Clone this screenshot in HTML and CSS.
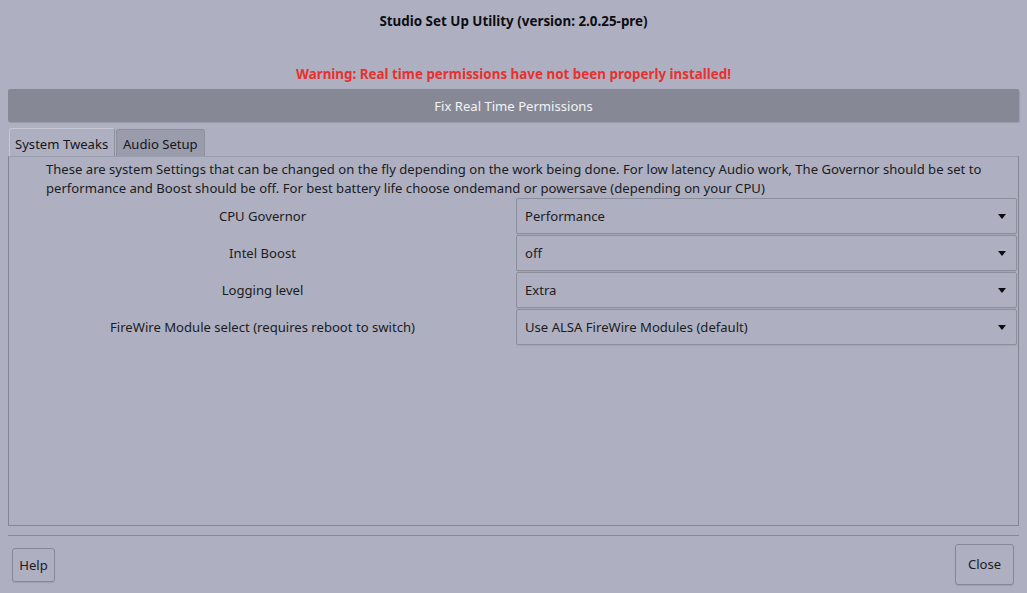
FILE: index.html
```html
<!DOCTYPE html>
<html>
<head>
<meta charset="utf-8">
<link rel="stylesheet" href="styles.css">
</head>
<body>
<div class="window">
  <div class="title">Studio Set Up Utility (version: 2.0.25-pre)</div>
  <div class="warning">Warning: Real time permissions have not been properly installed!</div>
  <div class="fix">Fix Real Time Permissions</div>
  <div class="tabs">
    <div class="tab active">System Tweaks</div>
    <div class="tab">Audio Setup</div>
  </div>
  <div class="panel">
    <p class="desc">These are system Settings that can be changed on the fly depending on the work being done. For low latency Audio work, The Governor should be set to<br>performance and Boost should be off. For best battery life choose ondemand or powersave (depending on your CPU)</p>
    <div class="grid">
      <div class="label">CPU Governor</div>
      <div class="combo"><span>Performance</span><span class="arrow"></span></div>
      <div class="label">Intel Boost</div>
      <div class="combo"><span>off</span><span class="arrow"></span></div>
      <div class="label">Logging level</div>
      <div class="combo"><span>Extra</span><span class="arrow"></span></div>
      <div class="label">FireWire Module select (requires reboot to switch)</div>
      <div class="combo"><span>Use ALSA FireWire Modules (default)</span><span class="arrow"></span></div>
    </div>
  </div>
  <div class="sep"></div>
  <div class="footer">
    <div class="btn help">Help</div>
    <div class="btn close">Close</div>
  </div>
</div>
</body>
</html>
```
FILE: styles.css
```css
html, body {
  margin: 0;
  padding: 0;
  background: #aeb0c1;
}
body {
  font-family: "Noto Sans", "DejaVu Sans", sans-serif;
  font-size: 13.1px;
  color: #1b1b22;
}
.window {
  width: 1027px;
  height: 593px;
  display: flex;
  flex-direction: column;
  box-sizing: border-box;
}
.title {
  height: 42px;
  line-height: 42px;
  text-align: center;
  font-weight: bold;
  font-size: 13.4px;
  color: #0d0d12;
}
.warning {
  margin-top: 22px;
  height: 21px;
  line-height: 21px;
  text-align: center;
  font-weight: bold;
  font-size: 13.4px;
  color: #e8302e;
}
.fix {
  margin: 4px 8px 0 8px;
  height: 32px;
  padding-top: 1px;
  line-height: 32px;
  background: #868995;
  border-radius: 2px;
  text-align: center;
  color: #f2f3f6;
  box-shadow: 1px 1px 1px rgba(0,0,0,0.12);
}
.tabs {
  margin: 7px 0 0 9px;
  display: flex;
  align-items: flex-end;
  height: 27px;
  position: relative;
  z-index: 1;
}
.tab {
  box-sizing: border-box;
  height: 27px;
  line-height: 28px;
  padding: 0 6px 0 6px;
  border: 1px solid #8d909e;
  border-bottom: none;
  border-radius: 3px 3px 0 0;
  background: #9a9cac;
  color: #15151b;
  white-space: nowrap;
  flex: none;
}
.tab.active {
  background: #aeb0c1;
  height: 28px;
  line-height: 30px;
  width: 106px;
  padding-left: 5px;
  border-color: #c6c8d3 #8d909e #8d909e #c6c8d3;
}
.tab + .tab {
  margin-left: 1px;
  width: 89px;
}
.panel {
  margin: 0 8px 0 8px;
  height: 370px;
  box-sizing: border-box;
  border: 1px solid #828593;
  border-top-color: #9a9dab;
}
.desc {
  margin: 3px 0 0 37px;
  line-height: 19px;
}
.grid {
  margin-top: 0;
  display: grid;
  grid-template-columns: 507px 501px;
  grid-auto-rows: 36px;
  row-gap: 1px;
}
.label {
  text-align: center;
  line-height: 36px;
}
.combo {
  box-sizing: border-box;
  border: 1px solid #8b8e9b;
  border-radius: 2px;
  display: flex;
  align-items: center;
  justify-content: space-between;
  padding: 0 10px 0 8px;
  box-shadow: 0 1px 0 rgba(0,0,0,0.06);
}
.arrow {
  width: 0;
  height: 0;
  border-left: 4.5px solid transparent;
  border-right: 4.5px solid transparent;
  border-top: 5px solid #0c0c10;
}
.sep {
  margin: 9px 8px 0 8px;
  height: 1px;
  background: #858896;
}
.footer {
  display: flex;
  justify-content: space-between;
  align-items: flex-start;
  padding: 0 13px 0 12px;
  height: 48px;
}
.btn {
  box-sizing: border-box;
  border: 1px solid #858896;
  border-radius: 3px;
  text-align: center;
  box-shadow: 0 1px 1px rgba(0,0,0,0.1);
}
.help {
  width: 43px;
  height: 34px;
  line-height: 32px;
  margin-top: 12px;
}
.close {
  width: 59px;
  height: 41px;
  line-height: 39px;
  margin-top: 8px;
}
```
